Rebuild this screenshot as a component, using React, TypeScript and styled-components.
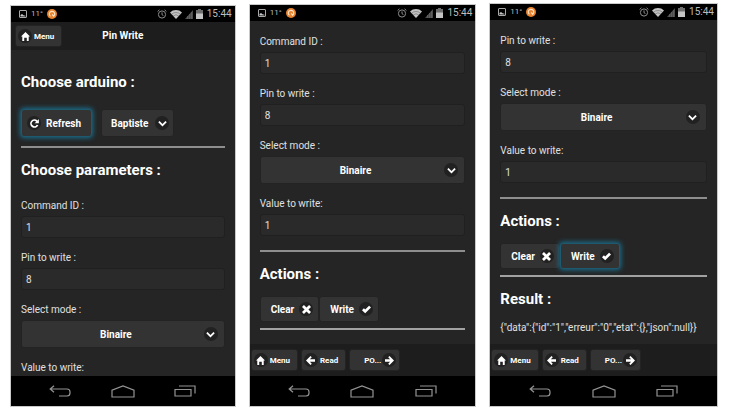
import React, { useId } from "react";
import styled, { createGlobalStyle, css } from "styled-components";

const GlobalStyle = createGlobalStyle`
  *, *::before, *::after { box-sizing: border-box; }
  body {
    margin: 0;
    background: #fff;
    font-family: Roboto, "Liberation Sans", sans-serif;
    font-size: 10px;
    color: #e0e0e0;
  }
  button, input, select { font: inherit; color: inherit; margin: 0; }
`;

/* ---------- layout ---------- */

const Gallery = styled.main`
  display: grid;
  grid-template-columns: 224fr 226fr 227fr;
  gap: 15px;
  height: 100vh;
  padding: 4px 14px 8px 11px;
`;

const Phone = styled.section<{ $drop: number }>`
  display: flex;
  flex-direction: column;
  min-width: 0;
  min-height: 0;
  margin-top: ${(p) => p.$drop}px;
  background: #252525;
  box-shadow: 0 0 0 1px #c9c9c9;
`;

const StatusBar = styled.div`
  display: flex;
  align-items: center;
  flex: none;
  height: 16px;
  padding: 0 3px 0 8px;
  background: #000;
  color: #bdbdbd;
  svg { display: block; flex: none; }
`;

const StatusLeft = styled.div`
  display: flex;
  align-items: center;
  gap: 4px;
  margin-right: auto;
`;

const StatusRight = styled.div`
  display: flex;
  align-items: center;
  gap: 3px;
`;

const Temperature = styled.span`
  font-size: 8px;
  line-height: 10px;
`;

const Clock = styled.time`
  margin-left: 1px;
  line-height: 14px;
`;

const Header = styled.header`
  display: grid;
  grid-template-columns: 1fr auto 1fr;
  align-items: center;
  flex: none;
  height: 28px;
  padding: 0 4px;
  background: #1d1d1d;
`;

const Title = styled.h1`
  margin: 0;
  font-size: 10px;
  font-weight: 700;
  line-height: 14px;
  color: #fff;
`;

const Content = styled.div<{ $top: number }>`
  flex: 1;
  min-height: 0;
  overflow: hidden;
  padding: ${(p) => p.$top}px 10px 0;
`;

const Footer = styled.footer`
  display: flex;
  align-items: center;
  flex: none;
  gap: 3px;
  height: 32px;
  padding-left: 1px;
  background: #1d1d1d;
`;

const NavBar = styled.nav`
  display: flex;
  flex: none;
  height: 30px;
  padding: 0 18px;
  background: #000;
`;

const NavButton = styled.button`
  display: flex;
  flex: 1;
  align-items: center;
  justify-content: center;
  padding: 0;
  border: 0;
  background: none;
`;

/* ---------- content parts ---------- */

const Heading = styled.h2<{ $below?: number }>`
  margin: 0 0 ${(p) => p.$below ?? 13}px;
  font-size: 15px;
  font-weight: 700;
  line-height: 18px;
  color: #fff;
`;

const Rule = styled.hr<{ $above: number; $thin?: boolean }>`
  height: 2px;
  margin: ${(p) => p.$above}px 0 13px;
  border: 0;
  background: ${(p) => (p.$thin ? "#a2a2a2" : "#8e8e8e")};
`;

const Field = styled.div`
  display: flex;
  flex-direction: column;
  gap: 3px;
  margin-bottom: 13px;
`;

const Label = styled.label`
  line-height: 14px;
  white-space: nowrap;
`;

const TextInput = styled.input`
  width: 100%;
  height: 22px;
  padding: 0 4px;
  border: 1px solid #202020;
  border-radius: 3px;
  background: #2a2a2a;
  outline: 0;
`;

const SelectBox = styled.div`
  position: relative;
  display: flex;
`;

const raised = css`
  border: 1px solid #232323;
  border-radius: 3px;
  background: #333;
  color: #fff;
  font-weight: 700;
`;

const Select = styled.select<{ $wide?: boolean }>`
  ${raised}
  appearance: none;
  width: ${(p) => (p.$wide ? "100%" : "auto")};
  height: 28px;
  padding: ${(p) => (p.$wide ? "0 14px 0 0" : "0 24px 0 9px")};
  text-align: ${(p) => (p.$wide ? "center" : "left")};
  text-align-last: ${(p) => (p.$wide ? "center" : "left")};
`;

const SelectMark = styled.span<{ $wide?: boolean }>`
  position: absolute;
  top: 7px;
  right: ${(p) => (p.$wide ? 7 : 5)}px;
  pointer-events: none;
`;

const Disc = styled.span`
  display: flex;
  align-items: center;
  justify-content: center;
  flex: none;
  width: 14px;
  height: 14px;
  border-radius: 50%;
  background: #212121;
`;

const glow = css`
  position: relative;
  border-color: #1d5a70;
  box-shadow: 0 0 5px 1px #1b6f8e;
`;

const ActionButton = styled.button<{ $active?: boolean; $iconFirst?: boolean; $tall?: boolean }>`
  ${raised}
  display: flex;
  align-items: center;
  gap: 5px;
  height: ${(p) => (p.$tall ? 28 : 26)}px;
  padding: ${(p) => (p.$iconFirst ? "0 10px 0 5px" : "0 5px 0 10px")};
  ${(p) => p.$active && glow}
`;

const BarButton = styled.button<{ $trailing?: boolean }>`
  ${raised}
  display: flex;
  align-items: center;
  justify-self: start;
  gap: ${(p) => (p.$trailing ? 1 : 2)}px;
  height: 22px;
  padding: ${(p) => (p.$trailing ? "0 3px 0 14px" : "0 7px 0 2px")};
  font-size: 8px;
`;

const ButtonRow = styled.div<{ $gap?: number }>`
  display: flex;
  gap: ${(p) => p.$gap ?? 0}px;
`;

const Output = styled.p`
  margin: 0;
  line-height: 14px;
  white-space: nowrap;
`;

/* ---------- icons ---------- */

const glyphs = {
  home: "M7 0 0 7h2v7h3V9h4v5h3V7h2z",
  check: "M14 4 11 1 5 7 3 5 0 8l5 5z",
  close: "M14 3 11 0 7 4 3 0 0 3l4 4-4 4 3 3 4-4 4 4 3-3-4-4z",
  left: "M7 0 0 7l7 7 2-2-3-3h8V5H6l3-3z",
  right: "m7 0 7 7-7 7-2-2 3-3H0V5h8L5 2z",
  down: "M11.6 3 7 7.6 2.4 3 .4 5 7 11.6 13.6 5z",
  refresh:
    "M13 9.9A6.7 6.7 0 1 1 11.6 2.2L13.8 0V6.8H7L9.7 4.1A4 4 0 1 0 10.4 8.8z",
};

function Glyph({ name }: { name: keyof typeof glyphs }) {
  return (
    <Disc>
      <svg width="9" height="9" viewBox="0 0 14 14" aria-hidden="true">
        <path d={glyphs[name]} fill="#fff" />
      </svg>
    </Disc>
  );
}

function Status() {
  return (
    <StatusBar>
      <StatusLeft>
        <svg width="8" height="8" viewBox="0 0 8 8" aria-hidden="true">
          <rect x=".5" y=".5" width="7" height="7" rx=".5" fill="none" stroke="#a8a8a8" />
          <path d="M1.5 6.5V5l1.5-1 1.5 1.2 2 .5v.8z" fill="#c8c8c8" />
        </svg>
        <Temperature>11°</Temperature>
        <svg width="10" height="10" viewBox="0 0 10 10" aria-hidden="true">
          <circle cx="5" cy="5" r="5" fill="#e8832f" />
          <path d="M3.4 7.2A2.7 2.7 0 1 1 6.6 7.2L5.2 5.4" fill="none" stroke="#ffe3c4" strokeWidth="1.2" />
        </svg>
      </StatusLeft>
      <StatusRight>
        <svg width="10" height="10" viewBox="0 0 10 10" fill="none" stroke="#8d8d8d" aria-hidden="true">
          <circle cx="5" cy="5.5" r="3.6" />
          <path d="M5 3.4v2.3l1.4.8M.6 2.5 2.4.8M9.4 2.5 7.6.8" />
        </svg>
        <svg width="12" height="9" viewBox="0 0 12 9" aria-hidden="true">
          <path d="M6 9 0 2.4a9 9 0 0 1 12 0z" fill="#c4c4c4" />
          <path d="M1.6 4.2a6.6 6.6 0 0 1 8.8 0M3.2 6a4.2 4.2 0 0 1 5.6 0" fill="none" stroke="#555" strokeWidth=".5" />
        </svg>
        <svg width="8" height="9" viewBox="0 0 8 9" aria-hidden="true">
          <path d="M8 0v9H0z" fill="#4c4c4c" />
          <path d="M2.5 6v3M4.5 4v5M6.5 2v7" stroke="#6b6b6b" strokeWidth=".6" />
        </svg>
        <svg width="7" height="10" viewBox="0 0 7 10" aria-hidden="true">
          <path d="M2 0h3v1h2v9H0V1h2z" fill="#6f6f6f" />
          <path d="M0 4.5h7V10H0z" fill="#c4c4c4" />
        </svg>
        <Clock>15:44</Clock>
      </StatusRight>
    </StatusBar>
  );
}

function SystemNav() {
  const line = { fill: "none", stroke: "#949494" };
  return (
    <NavBar>
      <NavButton aria-label="Back">
        <svg width="22" height="12" viewBox="0 0 22 12" {...line}>
          <path d="M5 .8 1.2 4 5 7.2M1.2 4H18a3 3 0 0 1 3 3v1a3 3 0 0 1-3 3h-8" strokeWidth="1.2" />
        </svg>
      </NavButton>
      <NavButton aria-label="Home">
        <svg width="24" height="13" viewBox="0 0 24 13" {...line}>
          <path d="M1 12V5.2L12 1l11 4.2V12z" strokeWidth="1.2" />
        </svg>
      </NavButton>
      <NavButton aria-label="Recent apps">
        <svg width="22" height="12" viewBox="0 0 22 12" {...line}>
          <path d="M1 4.5h16v6.5H1zM5 1h16v7.5" strokeWidth="1.2" />
        </svg>
      </NavButton>
    </NavBar>
  );
}

/* ---------- composed parts ---------- */

function TextField({ label, value }: { label: string; value: string }) {
  const id = useId();
  return (
    <Field>
      <Label htmlFor={id}>{label}</Label>
      <TextInput id={id} type="text" defaultValue={value} />
    </Field>
  );
}

function ModeField() {
  const id = useId();
  return (
    <Field>
      <Label htmlFor={id}>Select mode :</Label>
      <SelectBox>
        <Select id={id} $wide>
          <option>Binaire</option>
        </Select>
        <SelectMark $wide>
          <Glyph name="down" />
        </SelectMark>
      </SelectBox>
    </Field>
  );
}

function Actions({ writing }: { writing?: boolean }) {
  return (
    <>
      <Heading>Actions :</Heading>
      <ButtonRow>
        <ActionButton type="button">
          Clear
          <Glyph name="close" />
        </ActionButton>
        <ActionButton type="button" $active={writing}>
          Write
          <Glyph name="check" />
        </ActionButton>
      </ButtonRow>
      <Rule $above={6} $thin />
    </>
  );
}

function MenuButton() {
  return (
    <BarButton type="button">
      <Glyph name="home" />
      Menu
    </BarButton>
  );
}

function PageFooter() {
  return (
    <Footer>
      <MenuButton />
      <BarButton type="button">
        <Glyph name="left" />
        Read
      </BarButton>
      <BarButton type="button" $trailing>
        PO...
        <Glyph name="right" />
      </BarButton>
    </Footer>
  );
}

export default function App() {
  return (
    <>
      <GlobalStyle />
      <Gallery>
        <Phone $drop={2}>
          <Status />
          <Header>
            <MenuButton />
            <Title>Pin Write</Title>
          </Header>
          <Content $top={23}>
            <Heading $below={18}>Choose arduino :</Heading>
            <ButtonRow $gap={9}>
              <ActionButton type="button" $active $iconFirst $tall>
                <Glyph name="refresh" />
                Refresh
              </ActionButton>
              <SelectBox>
                <Select aria-label="Arduino">
                  <option>Baptiste</option>
                </Select>
                <SelectMark>
                  <Glyph name="down" />
                </SelectMark>
              </SelectBox>
            </ButtonRow>
            <Rule $above={9} />
            <Heading $below={20}>Choose parameters :</Heading>
            <TextField label="Command ID :" value="1" />
            <TextField label="Pin to write :" value="8" />
            <ModeField />
            <TextField label="Value to write:" value="1" />
          </Content>
          <SystemNav />
        </Phone>

        <Phone $drop={1}>
          <Status />
          <Content $top={14}>
            <TextField label="Command ID :" value="1" />
            <TextField label="Pin to write :" value="8" />
            <ModeField />
            <TextField label="Value to write:" value="1" />
            <Rule $above={14} />
            <Actions />
          </Content>
          <PageFooter />
          <SystemNav />
        </Phone>

        <Phone $drop={0}>
          <Status />
          <Content $top={14}>
            <TextField label="Pin to write :" value="8" />
            <ModeField />
            <TextField label="Value to write:" value="1" />
            <Rule $above={14} />
            <Actions writing />
            <Heading>Result :</Heading>
            <Output>{'{"data":{"id":"1","erreur":"0","etat":{},"json":null}}'}</Output>
          </Content>
          <PageFooter />
          <SystemNav />
        </Phone>
      </Gallery>
    </>
  );
}
